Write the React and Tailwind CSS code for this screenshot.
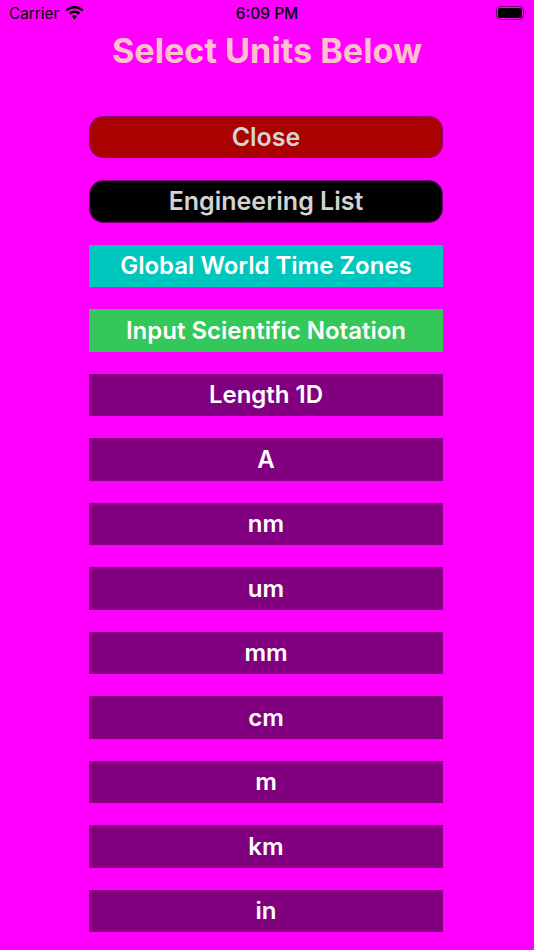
const UNITS = ['Length 1D', 'A', 'nm', 'um', 'mm', 'cm', 'm', 'km', 'in'];

function WifiIcon() {
  return (
    <svg width="19" height="14" viewBox="0 0 19 14" fill="#000" className="-mt-[2px]">
      <path d="M9.500 0C6 0 2.800 1.400.4 3.700l1.800 1.900C4.100 3.700 6.700 2.600 9.500 2.600s5.400 1.100 7.300 3l1.800-1.900C16.200 1.400 13 0 9.500 0z" />
      <path d="M9.500 4.500c-2.200 0-4.200.9-5.700 2.300l1.800 1.900c1-1 2.400-1.600 3.900-1.600s2.900.6 3.900 1.600l1.800-1.900C13.700 5.400 11.700 4.500 9.500 4.500z" />
      <path d="M9.500 9.100c-1 0-1.800.4-2.500 1l2.500 3.600 2.500-3.600c-.7-.6-1.500-1-2.500-1z" />
    </svg>
  );
}

function StatusBar() {
  return (
    <div className="relative flex h-[28px] items-center justify-between pl-[9px] pr-[8px] text-black">
      <div className="flex items-center gap-[6px]">
        <span className="text-[15.300px] leading-none">Carrier</span>
        <WifiIcon />
      </div>
      <span className="absolute left-0 right-0 text-center text-[15.500px] font-medium leading-none">6:09 PM</span>
      <div className="-mt-[2px] flex items-center">
        <div className="flex h-[14px] w-[28px] items-center justify-center rounded-[4px] border border-[#80007f]">
          <div className="h-[10px] w-[24px] rounded-[2px] bg-black" />
        </div>
        <div className="ml-[1px] h-[4px] w-[1.500px] rounded-r-sm bg-[#80007f]" />
      </div>
    </div>
  );
}

function UnitButton({ label, className }) {
  return (
    <button className={`flex h-[42.500px] w-[354px] shrink-0 items-center justify-center pt-[1px] font-semibold ${className}`}>
      {label}
    </button>
  );
}

export default function App() {
  return (
    <div className="h-[950px] overflow-hidden bg-[#ff00ff] font-['Inter',sans-serif]">
      <StatusBar />
      <h1 className="mt-[3px] text-center text-[34.200px] font-bold leading-[40px] text-[#ffc0cb]">Select Units Below</h1>
      <div className="mt-[44.500px] flex flex-col items-center gap-[22px] pr-[2px]">
        <UnitButton label="Close" className="rounded-[14px] border border-[#80007f] bg-[#aa0000] text-[25px] text-[#d3d3d3]" />
        <UnitButton label="Engineering List" className="rounded-[14px] border border-[#80007f] bg-black text-[25px] text-[#d3d3d3]" />
        <UnitButton label="Global World Time Zones" className="bg-[#00c7be] text-[24px] text-white" />
        <UnitButton label="Input Scientific Notation" className="bg-[#34c759] text-[24px] text-white" />
        {UNITS.map((u) => (
          <UnitButton key={u} label={u} className="bg-[#800080] text-[24px] text-white" />
        ))}
      </div>
    </div>
  );
}
